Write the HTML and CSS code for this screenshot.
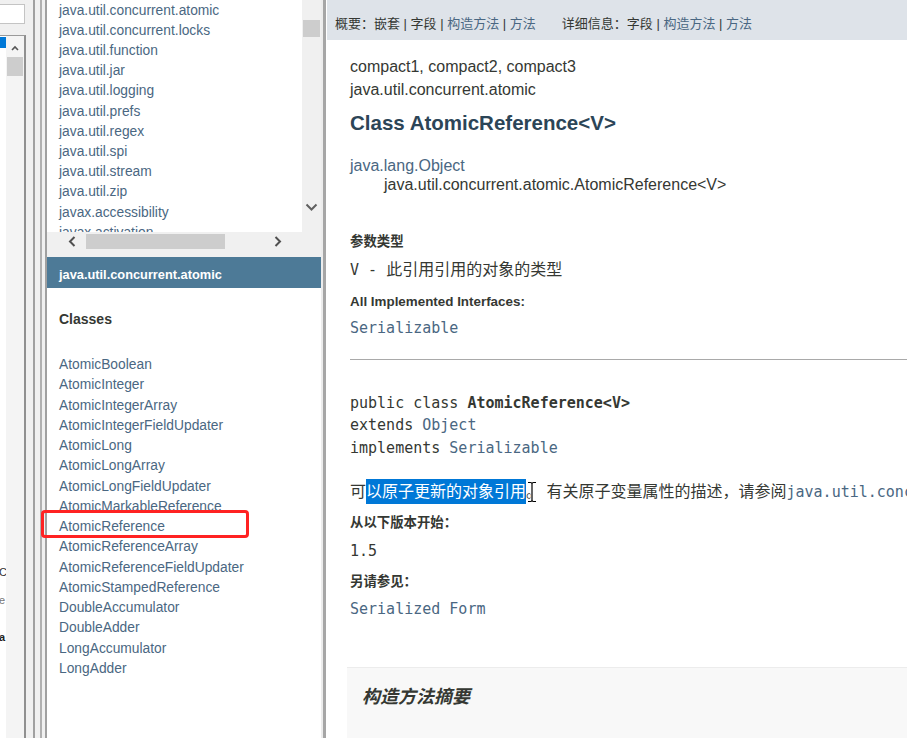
FILE: index.html
```html
<!DOCTYPE html>
<html lang="zh-CN">
<head>
<meta charset="utf-8">
<title>AtomicReference</title>
<link rel="stylesheet" href="styles.css">
</head>
<body>
<div class="app">
  <div class="lm">
    <div class="lm-input"></div>
    <div class="lm-list">
      <div class="lm-items">
        <div class="lm-sel"></div>
        <div class="lm-frag f1">C</div>
        <div class="lm-frag f2">e</div>
        <div class="lm-frag f3">a</div>
      </div>
      <div class="lm-scroll">
        <svg class="lm-up" width="8" height="6" viewBox="0 0 8 6"><path d="M1 5L4 2L7 5" fill="none" stroke="#555" stroke-width="1.6"/></svg>
        <div class="lm-thumb"></div>
      </div>
    </div>
  </div>
  <div class="split"></div>
  <div class="lf">
    <div class="pkg">
      <div class="pkg-top">
        <ul class="pkg-list">
          <li>java.util.concurrent.atomic</li>
          <li>java.util.concurrent.locks</li>
          <li>java.util.function</li>
          <li>java.util.jar</li>
          <li>java.util.logging</li>
          <li>java.util.prefs</li>
          <li>java.util.regex</li>
          <li>java.util.spi</li>
          <li>java.util.stream</li>
          <li>java.util.zip</li>
          <li>javax.accessibility</li>
          <li>javax.activation</li>
        </ul>
        <div class="vscroll">
          <div class="vthumb"></div>
          <svg class="vdown" width="13" height="8" viewBox="0 0 13 8"><path d="M1.5 1.5L6.5 6.5L11.5 1.5" fill="none" stroke="#606060" stroke-width="2"/></svg>
        </div>
      </div>
      <div class="hrow">
        <div class="hscroll">
          <div class="hbtn hbtn-l"><svg width="10" height="11" viewBox="0 0 10 11"><path d="M7.5 1L3 5.5L7.5 10" fill="none" stroke="#505050" stroke-width="2"/></svg></div>
          <div class="hthumb"></div>
          <div class="hbtn hbtn-r"><svg width="10" height="11" viewBox="0 0 10 11"><path d="M2.5 1L7 5.5L2.5 10" fill="none" stroke="#505050" stroke-width="2"/></svg></div>
        </div>
        <div class="corner"></div>
      </div>
    </div>
    <div class="hsplit"></div>
    <div class="cls">
      <div class="cls-title">java.util.concurrent.atomic</div>
      <h2 class="cls-h">Classes</h2>
      <ul class="cls-list">
        <li>AtomicBoolean</li>
        <li>AtomicInteger</li>
        <li>AtomicIntegerArray</li>
        <li>AtomicIntegerFieldUpdater</li>
        <li>AtomicLong</li>
        <li>AtomicLongArray</li>
        <li>AtomicLongFieldUpdater</li>
        <li>AtomicMarkableReference</li>
        <li>AtomicReference</li>
        <li>AtomicReferenceArray</li>
        <li>AtomicReferenceFieldUpdater</li>
        <li>AtomicStampedReference</li>
        <li>DoubleAccumulator</li>
        <li>DoubleAdder</li>
        <li>LongAccumulator</li>
        <li>LongAdder</li>
      </ul>
    </div>
  </div>
  <div class="vsplit"></div>
  <div class="main">
    <div class="subnav">
      <span>概要：嵌套 | 字段 | <a class="lk">构造方法</a> | <a class="lk">方法</a></span>
      <span>详细信息：字段 | <a class="lk">构造方法</a> | <a class="lk">方法</a></span>
    </div>
    <div class="content">
      <div class="meta">compact1, compact2, compact3</div>
      <div class="meta">java.util.concurrent.atomic</div>
      <h2 class="title">Class AtomicReference&lt;V&gt;</h2>
      <div class="inherit">
        <div class="lk">java.lang.Object</div>
        <div class="sub">java.util.concurrent.atomic.AtomicReference&lt;V&gt;</div>
      </div>
      <div class="lbl lbl1">参数类型</div>
      <div class="dd tp"><code class="mono">V - </code>此引用引用的对象的类型</div>
      <div class="lbl lbl2">All Implemented Interfaces:</div>
      <div class="dd ser"><code class="mono lk">Serializable</code></div>
      <div class="rule"></div>
      <pre class="sig">public class <b>AtomicReference&lt;V&gt;</b>
extends <span class="lk">Object</span>
implements <span class="lk">Serializable</span></pre>
      <div class="desc">可<span class="sel">以原子更新的对象引用</span>。 有关原子变量属性的描述，请参阅<code class="mono lk">java.util.conc</code>
        <svg class="ibeam" width="10" height="22" viewBox="0 0 10 22"><path d="M1 1.5h2.5q1.5 0 1.5 1.5v16q0 1.5-1.5 1.5H1M9 1.5H6.5Q5 1.5 5 3v16q0 1.5 1.5 1.5H9" fill="none" stroke="#fff" stroke-width="3"/><path d="M1 1.5h2.5q1.5 0 1.5 1.5v16q0 1.5-1.5 1.5H1M9 1.5H6.5Q5 1.5 5 3v16q0 1.5 1.5 1.5H9" fill="none" stroke="#000" stroke-width="1.2"/></svg>
      </div>
      <div class="lbl lbl3">从以下版本开始：</div>
      <div class="dd since"><code class="mono">1.5</code></div>
      <div class="lbl lbl4">另请参见：</div>
      <div class="dd seealso"><code class="mono lk">Serialized Form</code></div>
      <div class="summary">
        <h3>构造方法摘要</h3>
      </div>
    </div>
  </div>
</div>
<div class="mark"></div>
</body>
</html>
```
FILE: styles.css
```css
* { box-sizing: border-box; }
html, body { margin: 0; padding: 0; }
body {
  width: 907px;
  height: 738px;
  overflow: hidden;
  position: relative;
  background: #f0f0f0;
  font-family: "Liberation Sans", Arial, "Noto Sans CJK SC", sans-serif;
  color: #353833;
}
.app { display: flex; height: 738px; }
.lk { color: #4a6782; text-decoration: none; }
.mono { font-family: "DejaVu Sans Mono", "Liberation Mono", "Noto Sans CJK SC", monospace; font-size: 15px; }

/* leftmost pane */
.lm { width: 26px; flex: none; display: flex; flex-direction: column; background: #f0f0f0; }
.lm-input { margin-top: 4px; height: 20px; width: 25px; background: #fff; border: 1px solid #c4c4c4; border-left: none; }
.lm-list { margin-top: 11px; flex: 1; display: flex; border-top: 1px solid #9a9a9a; border-right: 2px solid #909090; }
.lm-items { width: 6px; background: #fff; overflow: hidden; display: flex; flex-direction: column; }
.lm-sel { margin-top: 1px; height: 11px; background: #0078d7; }
.lm-frag { font-size: 11px; line-height: 14px; white-space: nowrap; margin-left: -1px; }
.f1 { margin-top: 517px; color: #333; }
.f2 { margin-top: 14px; color: #777; }
.f3 { margin-top: 23px; color: #222; font-weight: bold; }
.lm-scroll { width: 18px; background: #f4f4f4; display: flex; flex-direction: column; align-items: center; }
.lm-up { margin-top: 9px; flex: none; }
.lm-thumb { margin-top: 6px; width: 16px; height: 19px; background: #cdcdcd; }

/* frame splitter */
.split {
  width: 21px; flex: none;
  background: linear-gradient(to right, #f0f0f0 0 7px, #a0a0a0 7px 9px, #f0f0f0 9px 14px, #b0b0b0 14px 16px, #f0f0f0 16px 19px, #a0a0a0 19px 21px);
}

/* left frames */
.lf { width: 276px; flex: none; display: flex; flex-direction: column; border-right: 2px solid #ececec; }
.pkg { height: 250px; display: flex; flex-direction: column; flex: none; }
.pkg-top { height: 232px; display: flex; }
.pkg-list {
  flex: 1; margin: 0; padding: 0 0 0 12px; list-style: none; overflow: hidden;
  background: #fff; font-size: 13.8px; line-height: 20.2px; color: #4a6782; white-space: nowrap;
}
.pkg-list li:first-child { margin-top: 0.5px; }
.vscroll { width: 19px; background: #f0f0f0; display: flex; flex-direction: column; align-items: center; }
.vthumb { margin-top: 20px; width: 17px; height: 17px; background: #cdcdcd; }
.vdown { margin-top: auto; margin-bottom: 21px; flex: none; }
.hrow { height: 18px; display: flex; }
.hscroll { flex: 1; display: flex; align-items: center; background: #f0f0f0; }
.hbtn { display: flex; align-items: center; height: 18px; }
.hbtn-l { width: 39px; justify-content: flex-end; padding-right: 9px; }
.hbtn-r { width: 40px; margin-left: auto; padding-left: 11px; }
.hthumb { width: 139px; height: 15px; background: #cdcdcd; }
.corner { width: 19px; background: #f0f0f0; }
.hsplit { height: 7px; background: #f0f0f0; flex: none; }
.cls { flex: 1; background: #fff; }
.cls-title {
  height: 31px; background: #4d7a97; color: #fff; font-weight: bold; font-size: 12.8px;
  padding: 5px 0 0 12px; line-height: 26px; white-space: nowrap;
}
.cls-h { margin: 21px 0 0 12px; font-size: 14px; line-height: 20px; font-weight: bold; color: #353833; }
.cls-list {
  margin: 26px 0 0; padding: 0 0 0 12px; list-style: none;
  font-size: 13.8px; line-height: 20.27px; color: #4a6782; white-space: nowrap;
}

/* main frame */
.vsplit { width: 4px; flex: none; background: linear-gradient(to right, #a6a6a6 0 3px, #fff 3px); }
.main { flex: 1; min-width: 0; background: #fff; display: flex; flex-direction: column; overflow: hidden; }
.subnav {
  height: 40px; flex: none; background: #dee3e9; padding: 7px 0 0 8px; line-height: 33px;
  font-size: 13px; white-space: nowrap; display: flex; gap: 26px;
}
.content { padding: 15px 0 0 23px; font-size: 16px; white-space: nowrap; }
.meta { line-height: 23px; }
.title { margin: 9px 0 0; font-size: 20.5px; line-height: 26px; font-weight: bold; color: #2c4557; }
.inherit { margin-top: 19.5px; line-height: 19px; }
.inherit .sub { padding-left: 34px; }
.lbl { font-size: 13.4px; font-weight: bold; line-height: 20px; }
.lbl1 { margin-top: 38.5px; }
.lbl2 { margin-top: 11px; }
.lbl3 { margin-top: 8.5px; }
.lbl4 { margin-top: 10px; }
.dd { line-height: 22px; }
.tp { margin-top: 7px; }
.ser { margin-top: 5px; }
.rule { margin-top: 20px; height: 1px; background: #a9a9a9; }
.sig {
  margin: 31.75px 0 0; font-family: "DejaVu Sans Mono", "Liberation Mono", monospace;
  font-size: 15px; line-height: 22.5px; color: #353833;
}
.desc { margin-top: 19.25px; line-height: 25px; position: relative; }
.sel { display: inline-block; vertical-align: top; line-height: 25px; height: 25px; background: #0078d7; color: #fff; }
.ibeam { position: absolute; left: 177px; top: 2px; }
.since { margin-top: 7px; }
.seealso { margin-top: 6px; }
.summary {
  margin: 47px 0 0 -3px; height: 200px; background: #f8f8f8; border-top: 1px solid #ececec;
  padding: 17px 0 0 15px;
}
.summary h3 { margin: 0; font-size: 18px; line-height: 24px; font-weight: bold; font-style: italic; color: #353833; }

/* annotation box */
.mark {
  position: absolute; left: 41px; top: 510px; width: 208px; height: 28px;
  border: 3px solid #ff2222; border-radius: 4px;
}
```
